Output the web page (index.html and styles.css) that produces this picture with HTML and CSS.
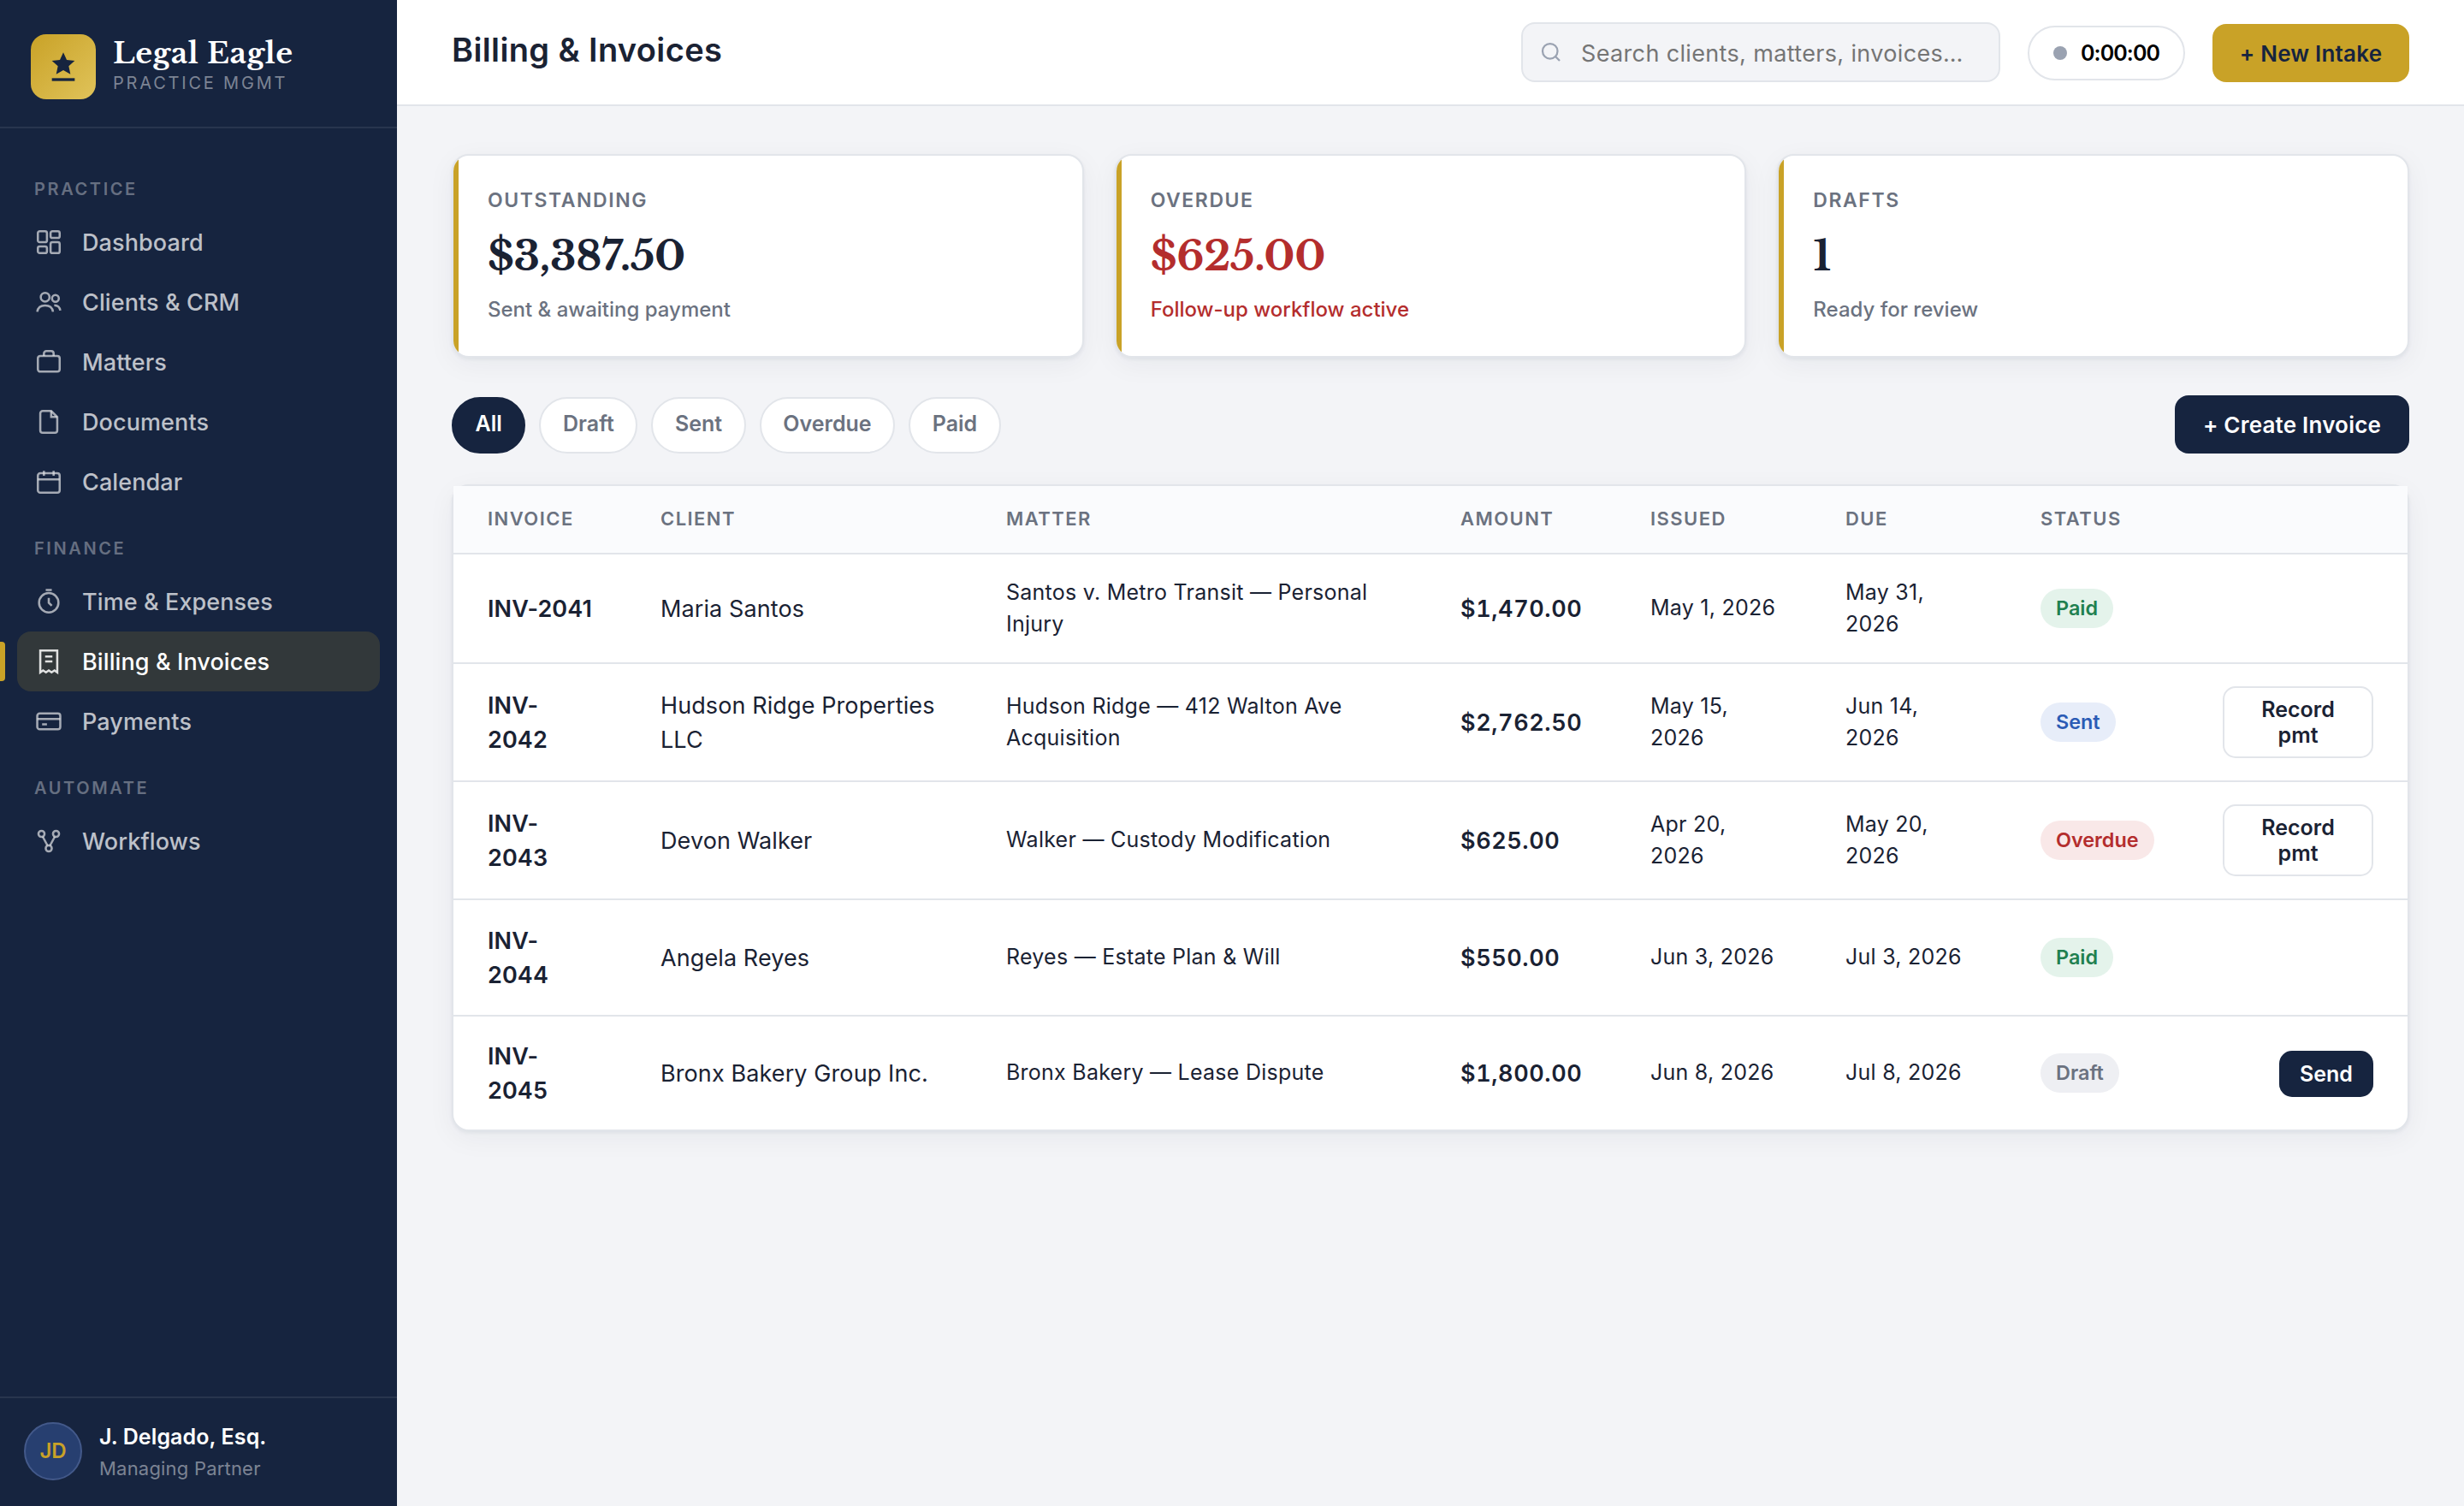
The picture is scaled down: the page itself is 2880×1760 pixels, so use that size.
FILE: index.html
```html
<!DOCTYPE html>
<html lang="en">
<head>
    <meta charset="UTF-8">
    <meta name="viewport" content="width=device-width, initial-scale=1.0">
    <title>Legal Eagle - Billing &amp; Invoices</title>
    <link rel="stylesheet" href="styles.css">
</head>
<body>
    <aside class="sidebar">
        <div class="brand">
            <div class="brand-logo">
                <svg width="40" height="40" viewBox="0 0 24 24" fill="#16243f"><path d="M12 2l2.4 5.2 5.6.6-4.2 3.8 1.2 5.6L12 14.4l-5 2.8 1.2-5.6L4 7.8l5.6-.6z"/><path d="M4 20h16v2H4z"/></svg>
            </div>
            <div class="brand-text">
                <div class="brand-name">Legal Eagle</div>
                <div class="brand-sub">Practice Mgmt</div>
            </div>
        </div>

        <nav class="nav">
            <div class="nav-label">Practice</div>
            <a class="nav-item">
                <svg viewBox="0 0 24 24"><rect x="3" y="3" width="7.5" height="9" rx="1.5"/><rect x="13.5" y="3" width="7.5" height="5.5" rx="1.5"/><rect x="13.5" y="12" width="7.5" height="9" rx="1.5"/><rect x="3" y="15.5" width="7.5" height="5.5" rx="1.5"/></svg>
                <span>Dashboard</span>
            </a>
            <a class="nav-item">
                <svg viewBox="0 0 24 24"><circle cx="9" cy="8" r="3.6"/><path d="M2.5 20c.5-3.4 3-5.2 6.5-5.2s6 1.8 6.5 5.2"/><circle cx="17.5" cy="9" r="2.8"/><path d="M16.5 14.6c2.9.1 4.6 1.6 5 4.4"/></svg>
                <span>Clients &amp; CRM</span>
            </a>
            <a class="nav-item">
                <svg viewBox="0 0 24 24"><rect x="3" y="7" width="18" height="13" rx="2"/><path d="M8 7V5a2 2 0 0 1 2-2h4a2 2 0 0 1 2 2v2"/></svg>
                <span>Matters</span>
            </a>
            <a class="nav-item">
                <svg viewBox="0 0 24 24"><path d="M14 3H7a2 2 0 0 0-2 2v14a2 2 0 0 0 2 2h10a2 2 0 0 0 2-2V8z"/><path d="M14 3v5h5"/></svg>
                <span>Documents</span>
            </a>
            <a class="nav-item">
                <svg viewBox="0 0 24 24"><rect x="3" y="5" width="18" height="16" rx="2"/><path d="M3 10h18M8 3v4M16 3v4"/></svg>
                <span>Calendar</span>
            </a>

            <div class="nav-label">Finance</div>
            <a class="nav-item">
                <svg viewBox="0 0 24 24"><circle cx="12" cy="13" r="8"/><path d="M12 9v4l2.5 2.5M9.5 2.5h5"/></svg>
                <span>Time &amp; Expenses</span>
            </a>
            <a class="nav-item active">
                <svg viewBox="0 0 24 24"><path d="M5 3h14v18l-2.3-1.6-2.4 1.6-2.3-1.6L9.7 21l-2.4-1.6L5 21z"/><path d="M9 8h6M9 12h6"/></svg>
                <span>Billing &amp; Invoices</span>
            </a>
            <a class="nav-item">
                <svg viewBox="0 0 24 24"><rect x="2.5" y="5.5" width="19" height="13" rx="2"/><path d="M2.5 10h19M6.5 14.5h4"/></svg>
                <span>Payments</span>
            </a>

            <div class="nav-label">Automate</div>
            <a class="nav-item">
                <svg viewBox="0 0 24 24"><circle cx="6" cy="6" r="2.5"/><circle cx="18" cy="6" r="2.5"/><circle cx="12" cy="18" r="2.5"/><path d="M7 8.3l4 7.4M17 8.3l-4 7.4"/></svg>
                <span>Workflows</span>
            </a>
        </nav>

        <div class="user">
            <div class="avatar">JD</div>
            <div>
                <div class="user-name">J. Delgado, Esq.</div>
                <div class="user-role">Managing Partner</div>
            </div>
        </div>
    </aside>

    <main class="main">
        <header class="topbar">
            <h1>Billing &amp; Invoices</h1>
            <div class="search">
                <svg viewBox="0 0 24 24"><circle cx="11" cy="11" r="7"/><path d="M20 20l-3.8-3.8"/></svg>
                <input type="text" placeholder="Search clients, matters, invoices…">
            </div>
            <div class="timer"><span class="timer-dot"></span><span class="timer-value">0:00:00</span></div>
            <button class="btn btn-gold">+ New Intake</button>
        </header>

        <div class="content">
            <section class="stats">
                <div class="stat">
                    <div class="stat-label">Outstanding</div>
                    <div class="stat-value">$3,387.50</div>
                    <div class="stat-note">Sent &amp; awaiting payment</div>
                </div>
                <div class="stat alert">
                    <div class="stat-label">Overdue</div>
                    <div class="stat-value">$625.00</div>
                    <div class="stat-note">Follow-up workflow active</div>
                </div>
                <div class="stat">
                    <div class="stat-label">Drafts</div>
                    <div class="stat-value">1</div>
                    <div class="stat-note">Ready for review</div>
                </div>
            </section>

            <div class="toolbar">
                <div class="filters">
                    <button class="pill active">All</button>
                    <button class="pill">Draft</button>
                    <button class="pill">Sent</button>
                    <button class="pill">Overdue</button>
                    <button class="pill">Paid</button>
                </div>
                <button class="btn btn-navy">+ Create Invoice</button>
            </div>

            <div class="card">
                <table class="invoices">
                    <colgroup>
                        <col class="c-invoice"><col class="c-client"><col class="c-matter"><col class="c-amount">
                        <col class="c-issued"><col class="c-due"><col class="c-status"><col class="c-action">
                    </colgroup>
                    <thead>
                        <tr><th>Invoice</th><th>Client</th><th>Matter</th><th>Amount</th><th>Issued</th><th>Due</th><th>Status</th><th></th></tr>
                    </thead>
                    <tbody>
                        <tr class="row-short">
                            <td class="strong">INV-2041</td>
                            <td>Maria Santos</td>
                            <td class="small">Santos v. Metro Transit — Personal<br>Injury</td>
                            <td class="strong amount">$1,470.00</td>
                            <td class="small">May 1, 2026</td>
                            <td class="small">May 31,<br>2026</td>
                            <td class="status"><span class="badge paid">Paid</span></td>
                            <td></td>
                        </tr>
                        <tr class="row-tall">
                            <td class="strong">INV-<br>2042</td>
                            <td>Hudson Ridge Properties<br>LLC</td>
                            <td class="small">Hudson Ridge — 412 Walton Ave<br>Acquisition</td>
                            <td class="strong amount">$2,762.50</td>
                            <td class="small">May 15,<br>2026</td>
                            <td class="small">Jun 14,<br>2026</td>
                            <td class="status"><span class="badge sent">Sent</span></td>
                            <td class="action"><button class="btn-sm">Record<br>pmt</button></td>
                        </tr>
                        <tr class="row-tall">
                            <td class="strong">INV-<br>2043</td>
                            <td>Devon Walker</td>
                            <td class="small">Walker — Custody Modification</td>
                            <td class="strong amount">$625.00</td>
                            <td class="small">Apr 20,<br>2026</td>
                            <td class="small">May 20,<br>2026</td>
                            <td class="status"><span class="badge overdue">Overdue</span></td>
                            <td class="action"><button class="btn-sm">Record<br>pmt</button></td>
                        </tr>
                        <tr>
                            <td class="strong">INV-<br>2044</td>
                            <td>Angela Reyes</td>
                            <td class="small">Reyes — Estate Plan &amp; Will</td>
                            <td class="strong amount">$550.00</td>
                            <td class="small">Jun 3, 2026</td>
                            <td class="small">Jul 3, 2026</td>
                            <td class="status"><span class="badge paid">Paid</span></td>
                            <td></td>
                        </tr>
                        <tr>
                            <td class="strong">INV-<br>2045</td>
                            <td>Bronx Bakery Group Inc.</td>
                            <td class="small">Bronx Bakery — Lease Dispute</td>
                            <td class="strong amount">$1,800.00</td>
                            <td class="small">Jun 8, 2026</td>
                            <td class="small">Jul 8, 2026</td>
                            <td class="status"><span class="badge draft">Draft</span></td>
                            <td class="action"><button class="btn-sm navy">Send</button></td>
                        </tr>
                    </tbody>
                </table>
            </div>
        </div>
    </main>
</body>
</html>
```

FILE: styles.css
```css
:root {
    --navy: #16243f;
    --gold: #c9a227;
    --line: #e2e5ea;
    --ink: #1a2233;
    --muted: #6b7280;
    --red: #b42d2d;
}
* {
    box-sizing: border-box;
}
body {
    margin: 0;
    display: flex;
    height: 1760px;
    font-family: Inter, "Liberation Sans", sans-serif;
    font-size: 28px;
    line-height: 1.5;
    color: var(--ink);
    background: #f3f4f7;
}
button, input {
    font-family: inherit;
}

/* Sidebar */
.sidebar {
    width: 464px;
    flex-shrink: 0;
    display: flex;
    flex-direction: column;
    background: var(--navy);
    color: #fff;
}
.brand {
    height: 150px;
    padding: 40px 36px 0;
    display: flex;
    gap: 20px;
    border-bottom: 2px solid rgba(255, 255, 255, 0.08);
}
.brand-logo {
    width: 76px;
    height: 76px;
    border-radius: 18px;
    display: flex;
    align-items: center;
    justify-content: center;
    background: linear-gradient(135deg, #c9a227, #e0c35a);
}
.brand-name {
    padding-top: 1px;
    font-family: "Libre Baskerville", "Liberation Serif", serif;
    font-weight: 700;
    font-size: 34px;
    line-height: 42px;
    letter-spacing: 0.015em;
}
.brand-sub {
    font-size: 20px;
    line-height: 28px;
    letter-spacing: 0.14em;
    text-transform: uppercase;
    color: rgba(255, 255, 255, 0.45);
}
.nav {
    flex: 1;
    padding: 28px 20px;
}
.nav-label {
    padding: 28px 20px 12px;
    font-size: 20px;
    line-height: 30px;
    font-weight: 600;
    letter-spacing: 0.13em;
    text-transform: uppercase;
    color: rgba(255, 255, 255, 0.35);
}
.nav-item {
    position: relative;
    height: 70px;
    padding: 0 20px;
    display: flex;
    align-items: center;
    gap: 22px;
    border-radius: 16px;
    font-size: 27px;
    font-weight: 500;
    letter-spacing: 0.1px;
    color: rgba(255, 255, 255, 0.72);
}
.nav-item span {
    padding-top: 3px;
}
.nav-item svg {
    width: 34px;
    height: 34px;
    fill: none;
    stroke: currentColor;
    stroke-width: 1.8;
    opacity: 0.85;
}
.nav-item.active {
    background: rgba(201, 162, 39, 0.16);
    color: #fff;
}
.nav-item.active::before {
    content: "";
    position: absolute;
    left: -20px;
    top: 12px;
    width: 6px;
    height: 46px;
    border-radius: 0 4px 4px 0;
    background: var(--gold);
}
.user {
    height: 128px;
    padding: 0 28px;
    display: flex;
    align-items: center;
    gap: 20px;
    border-top: 2px solid rgba(255, 255, 255, 0.08);
}
.avatar {
    width: 68px;
    height: 68px;
    margin-bottom: 2px;
    border: 2px solid #43598a;
    border-radius: 50%;
    display: flex;
    align-items: center;
    justify-content: center;
    background: #273f70;
    color: var(--gold);
    font-size: 24px;
    font-weight: 600;
}
.user-name {
    font-size: 25px;
    line-height: 37px;
    font-weight: 600;
    letter-spacing: 0.1px;
}
.user-role {
    padding-top: 1px;
    font-size: 22px;
    line-height: 35px;
    letter-spacing: 0.2px;
    color: rgba(255, 255, 255, 0.45);
}

/* Top bar */
.main {
    flex: 1;
}
.topbar {
    height: 124px;
    padding: 0 64px;
    display: flex;
    align-items: center;
    gap: 32px;
    background: #fff;
    border-bottom: 2px solid var(--line);
}
.topbar h1 {
    flex: 1;
    margin: 0;
    padding-bottom: 5px;
    font-size: 38px;
    font-weight: 600;
    letter-spacing: 0.01em;
}
.search {
    width: 560px;
    height: 70px;
    padding: 0 18px;
    display: flex;
    align-items: center;
    gap: 20px;
    border: 2px solid var(--line);
    border-radius: 16px;
    background: #f3f4f7;
}
.search svg {
    width: 30px;
    height: 30px;
    fill: none;
    stroke: #9aa2b1;
    stroke-width: 1.8;
}
.search input {
    flex: 1;
    min-width: 0;
    padding: 2px 0 0;
    border: none;
    background: none;
    font-size: 27px;
    letter-spacing: 0.35px;
}
.search input::placeholder {
    color: #757575;
}
.timer {
    width: 184px;
    height: 64px;
    margin-top: 2px;
    padding-left: 28px;
    display: flex;
    align-items: center;
    gap: 16px;
    border: 2px solid var(--line);
    border-radius: 32px;
    color: #000;
    font-size: 25px;
    font-weight: 600;
}
.timer-value {
    padding-top: 1px;
    letter-spacing: -0.9px;
}
.timer-dot {
    width: 16px;
    height: 16px;
    border-radius: 50%;
    background: #9aa2b1;
}
.btn {
    height: 68px;
    padding: 1px 0 0;
    border: none;
    border-radius: 16px;
    font-size: 26px;
    font-weight: 600;
    letter-spacing: 0.2px;
}
.btn-gold {
    width: 230px;
    margin-top: 2px;
    background: var(--gold);
    color: var(--navy);
}
.btn-navy {
    width: 274px;
    background: var(--navy);
    color: #fff;
}

/* Content */
.content {
    padding: 56px 64px;
}
.stats {
    display: grid;
    grid-template-columns: repeat(3, 1fr);
    gap: 36px;
}
.stat, .card {
    border: 2px solid var(--line);
    border-radius: 20px;
    background: #fff;
    box-shadow: 0 2px 4px rgba(22, 36, 63, 0.06), 0 8px 32px rgba(22, 36, 63, 0.05);
}
.stat {
    position: relative;
    height: 238px;
    padding: 35px 40px 0;
    overflow: hidden;
}
.stat::before {
    content: "";
    position: absolute;
    left: 0;
    top: 0;
    bottom: 0;
    width: 6px;
    background: var(--gold);
}
.stat-label {
    font-size: 23px;
    line-height: 35px;
    font-weight: 600;
    letter-spacing: 0.068em;
    text-transform: uppercase;
    color: var(--muted);
}
.stat-value {
    margin: 17px 0 15px;
    font-family: "Libre Baskerville", "Liberation Serif", serif;
    font-size: 48px;
    line-height: 60px;
    font-weight: 700;
    letter-spacing: -0.008em;
}
.stat-note {
    font-size: 24px;
    line-height: 36px;
    font-weight: 500;
    color: var(--muted);
}
.alert .stat-value, .alert .stat-note {
    color: var(--red);
}
.toolbar {
    height: 68px;
    margin: 44px 0 36px;
    display: flex;
    align-items: flex-end;
    justify-content: space-between;
}
.filters {
    display: flex;
    gap: 16px;
}
.pill {
    height: 66px;
    padding: 0 25.6px 4px;
    border: 2px solid var(--line);
    border-radius: 33px;
    background: #fff;
    color: var(--muted);
    font-size: 25px;
    font-weight: 600;
}
.pill.active {
    border-color: var(--navy);
    background: var(--navy);
    color: #fff;
}

/* Invoice table */
.invoices {
    width: 100%;
    table-layout: fixed;
    border-collapse: separate;
    border-spacing: 0;
}
.c-invoice { width: 202px; }
.c-client { width: 404px; }
.c-matter { width: 531px; }
.c-amount { width: 222px; }
.c-issued { width: 228px; }
.c-due { width: 228px; }
.c-status { width: 213px; }
.invoices th {
    height: 80px;
    padding: 0 0 2px 40px;
    text-align: left;
    font-size: 22px;
    font-weight: 600;
    letter-spacing: 0.066em;
    text-transform: uppercase;
    color: var(--muted);
    background: #fafbfd;
    border-bottom: 2px solid var(--line);
}
.invoices td {
    height: 136px;
    padding: 1px 0 0 40px;
    font-size: 27px;
    line-height: 40px;
    letter-spacing: 0.1px;
    white-space: nowrap;
    border-bottom: 2px solid var(--line);
}
.invoices .row-short td {
    height: 128px;
}
.invoices .row-tall td {
    height: 138px;
}
.invoices tr:last-child td {
    height: 132px;
    border-bottom: none;
}
.invoices .strong {
    font-weight: 600;
}
.invoices .amount {
    font-variant-numeric: tabular-nums;
    letter-spacing: 0.6px;
}
.invoices .small {
    padding: 0 0 1px 40px;
    font-size: 25px;
    line-height: 37px;
    letter-spacing: 0.25px;
}
.invoices .status {
    padding: 0 0 1px 40px;
    letter-spacing: 0;
}
.invoices .action {
    padding: 0 40px 0 0;
    text-align: right;
}
.badge {
    display: inline-block;
    padding: 0 18px;
    border-radius: 23px;
    font-size: 23.4px;
    line-height: 46px;
    font-weight: 600;
}
.paid { background: #e4f3eb; color: #1f8050; }
.sent { background: #e7edf9; color: #2b5bb5; }
.overdue { background: #f9e8e8; color: var(--red); }
.draft { background: #eeeff3; color: var(--muted); }
.btn-sm {
    width: 176px;
    padding: 10px 0;
    border: 2px solid var(--line);
    border-radius: 15px;
    background: #fff;
    color: var(--ink);
    font-size: 25px;
    line-height: 30px;
    font-weight: 600;
    vertical-align: middle;
}
.btn-sm.navy {
    width: 110px;
    margin-top: 2px;
    border-color: var(--navy);
    background: var(--navy);
    color: #fff;
}
```
